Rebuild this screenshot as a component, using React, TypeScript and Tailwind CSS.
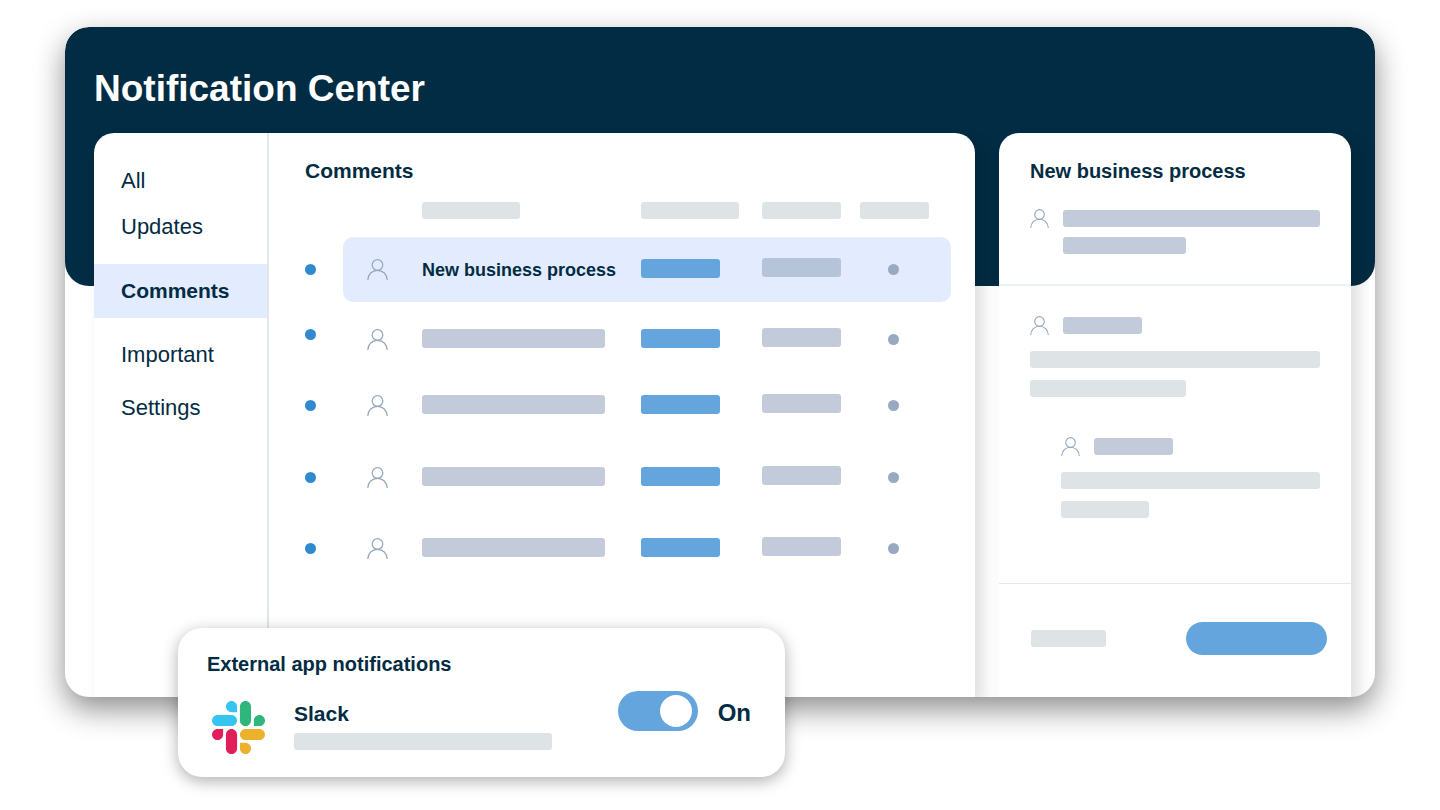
import { useState } from "react";
import clsx from "clsx";

type Row = { id: number; title?: string; height: string; unreadTop: string };

const rows: Row[] = [
  { id: 1, title: "New business process", height: "h-[70px]", unreadTop: "pt-[27px]" },
  { id: 2, height: "h-[66px]", unreadTop: "pt-[22px]" },
  { id: 3, height: "h-[72px]", unreadTop: "pt-[27px]" },
  { id: 4, height: "h-[71px]", unreadTop: "pt-[27px]" },
  { id: 5, height: "h-[65px]", unreadTop: "pt-[27px]" },
];

const navItems = [
  { label: "All", box: "h-[46px]" },
  { label: "Updates", box: "h-[46px]" },
  { label: "Comments", box: "mt-[15px] mb-2.5 h-[54px]", active: true },
  { label: "Important", box: "h-[53px]" },
  { label: "Settings", box: "h-[53px]" },
];

function PersonIcon({ className }: { className?: string }) {
  return (
    <svg viewBox="0 0 21 21" fill="none" stroke="#94a6be" strokeWidth="1.2" className={className} aria-hidden="true">
      <circle cx="10.5" cy="6" r="5.3" />
      <path d="M0.8 21C1 15.2 5 11.3 10.5 11.3S20 15.2 20.2 21" />
    </svg>
  );
}

function SlackLogo() {
  return (
    <svg viewBox="0 0 122.8 122.8" className="size-[53px] shrink-0" aria-hidden="true">
      <path fill="#e01e5a" d="M25.8 77.6c0 7.1-5.8 12.9-12.9 12.9S0 84.7 0 77.6s5.8-12.9 12.9-12.9h12.9v12.9zm6.5 0c0-7.1 5.8-12.9 12.9-12.9s12.9 5.8 12.9 12.9v32.3c0 7.1-5.8 12.9-12.9 12.9s-12.9-5.8-12.9-12.9V77.6z" />
      <path fill="#36c5f0" d="M45.2 25.8c-7.1 0-12.9-5.8-12.9-12.9S38.1 0 45.2 0s12.9 5.8 12.9 12.9v12.9H45.2zm0 6.5c7.1 0 12.9 5.8 12.9 12.9s-5.8 12.9-12.9 12.9H12.9C5.8 58.1 0 52.3 0 45.2s5.8-12.9 12.9-12.9h32.3z" />
      <path fill="#2eb67d" d="M97 45.2c0-7.1 5.8-12.9 12.9-12.9s12.9 5.8 12.9 12.9-5.8 12.9-12.9 12.9H97V45.2zm-6.5 0c0 7.1-5.8 12.9-12.9 12.9s-12.9-5.8-12.9-12.9V12.9C64.7 5.8 70.5 0 77.6 0s12.9 5.8 12.9 12.9v32.3z" />
      <path fill="#ecb22e" d="M77.6 97c7.1 0 12.9 5.8 12.9 12.9s-5.8 12.9-12.9 12.9-12.9-5.8-12.9-12.9V97h12.9zm0-6.5c-7.1 0-12.9-5.8-12.9-12.9s5.8-12.9 12.9-12.9h32.3c7.1 0 12.9 5.8 12.9 12.9s-5.8 12.9-12.9 12.9H77.6z" />
    </svg>
  );
}

function Bar({ className }: { className: string }) {
  return <div className={clsx("rounded-[3px]", className)} />;
}

function Sidebar() {
  return (
    <nav className="w-[175px] shrink-0 border-r-2 border-[#e0e6e9] pt-6">
      {navItems.map((item) => (
        <a
          key={item.label}
          href="#"
          aria-current={item.active ? "page" : undefined}
          className={clsx(
            "flex items-center pl-[27px]",
            item.box,
            item.active ? "bg-[#e3ecff] text-[21px] font-bold" : "text-[22px]",
          )}
        >
          {item.label}
        </a>
      ))}
    </nav>
  );
}

function CommentRow({ row }: { row: Row }) {
  const selected = Boolean(row.title);
  const cell = clsx("h-[65px]", selected && "bg-[#e3ecff]");
  return (
    <tr className={clsx("align-top", row.height)}>
      <td>
        <div className={row.unreadTop}>
          <div className="size-[11px] rounded-full bg-[#2f8ad0]" />
        </div>
      </td>
      <td>
        <div className={clsx(cell, "rounded-l-[10px] pt-[22px] pl-6")}>
          <PersonIcon className="size-[21px]" />
        </div>
      </td>
      <td>
        <div className={clsx(cell, "pt-[22px]")}>
          {row.title ? (
            <span className="block text-[18px] leading-[22px] font-bold whitespace-nowrap">{row.title}</span>
          ) : (
            <Bar className="h-[19px] w-[183px] bg-[#c3cbdb]" />
          )}
        </div>
      </td>
      <td>
        <div className={clsx(cell, "pt-[22px]")}>
          <Bar className="h-[19px] w-[79px] bg-[#63a5dc]" />
        </div>
      </td>
      <td>
        <div className={clsx(cell, "pt-[21px]")}>
          <Bar className={clsx("h-[19px] w-[79px]", selected ? "bg-[#b5c4d8]" : "bg-[#c3cbdb]")} />
        </div>
      </td>
      <td>
        <div className={clsx(cell, "rounded-r-[10px] pt-[27px] pl-7")}>
          <div className="size-[11px] rounded-full bg-[#98a9c1]" />
        </div>
      </td>
    </tr>
  );
}

function CommentsList() {
  return (
    <section className="min-w-0 flex-1 pt-6 pr-6 pl-9">
      <h2 className="text-[21px] leading-7 font-bold">Comments</h2>
      <table className="mt-[17px] w-full table-fixed border-collapse">
        <colgroup>
          <col className="w-[38px]" />
          <col className="w-[79px]" />
          <col />
          <col className="w-[121px]" />
          <col className="w-[98px]" />
          <col className="w-[91px]" />
        </colgroup>
        <thead>
          <tr className="h-[35px] align-top">
            <td />
            <td />
            <th><Bar className="h-[17px] w-[98px] bg-[#dee4e6]" /></th>
            <th><Bar className="h-[17px] w-[98px] bg-[#dee4e6]" /></th>
            <th><Bar className="h-[17px] w-[79px] bg-[#dee4e6]" /></th>
            <th><Bar className="h-[17px] w-[69px] bg-[#dee4e6]" /></th>
          </tr>
        </thead>
        <tbody>
          {rows.map((row) => (
            <CommentRow key={row.id} row={row} />
          ))}
        </tbody>
      </table>
    </section>
  );
}

function DetailPanel() {
  return (
    <aside className="flex w-[352px] shrink-0 flex-col rounded-t-[20px] bg-white shadow-[8px_8px_16px_rgba(0,0,0,0.13)]">
      <header className="h-[153px] border-b-2 border-[#eef1f2] px-[31px] pt-6">
        <h2 className="text-[20px] leading-7 font-bold">New business process</h2>
        <div className="mt-6 flex gap-[14px]">
          <PersonIcon className="size-[19px] shrink-0" />
          <div className="flex-1 pt-px">
            <Bar className="h-[17px] bg-[#c3cbdb]" />
            <Bar className="mt-2.5 h-[17px] w-[123px] bg-[#c3cbdb]" />
          </div>
        </div>
      </header>

      <div className="flex-1 px-[31px] pt-[30px]">
        <div className="flex items-center gap-[14px]">
          <PersonIcon className="size-[19px]" />
          <Bar className="h-[17px] w-[79px] bg-[#c3cbdb]" />
        </div>
        <Bar className="mt-4 h-[17px] bg-[#dee4e6]" />
        <Bar className="mt-3 h-[17px] w-[156px] bg-[#dee4e6]" />

        <div className="mt-10 pl-[31px]">
          <div className="flex items-center gap-[14px]">
            <PersonIcon className="size-[19px]" />
            <Bar className="h-[17px] w-[79px] bg-[#c3cbdb]" />
          </div>
          <Bar className="mt-4 h-[17px] bg-[#dee4e6]" />
          <Bar className="mt-3 h-[17px] w-[88px] bg-[#dee4e6]" />
        </div>
      </div>

      <footer className="flex h-[114px] items-center justify-between border-t border-[#e4e9eb] pr-6 pb-1 pl-8">
        <Bar className="h-[17px] w-[75px] bg-[#dee4e6]" />
        <button type="button" aria-label="Reply" className="h-[33px] w-[141px] rounded-full bg-[#63a5dc]" />
      </footer>
    </aside>
  );
}

function ExternalApps() {
  const [on, setOn] = useState(true);
  return (
    <section className="absolute -bottom-20 left-[113px] w-[607px] rounded-[24px] bg-white px-[29px] pt-[22px] pb-[23px] shadow-[0_4px_16px_rgba(0,0,0,0.32)]">
      <h2 className="text-[20px] leading-7 font-bold">External app notifications</h2>
      <div className="mt-3 flex items-start pl-[5px]">
        <div className="pt-[11px]">
          <SlackLogo />
        </div>
        <div className="pt-2.5 pl-[29px]">
          <h3 className="text-[21px] leading-7 font-bold">Slack</h3>
          <Bar className="mt-[5px] h-[17px] w-[258px] bg-[#dee4e6]" />
        </div>
        <label className="ml-auto flex items-center gap-5 pt-px pr-[5px]">
          <input
            type="checkbox"
            role="switch"
            checked={on}
            onChange={(e) => setOn(e.target.checked)}
            className="h-10 w-20 appearance-none rounded-full bg-[#c3cbdb] px-1.5 py-1 before:block before:size-8 before:rounded-full before:bg-white checked:bg-[#63a5dc] checked:before:ml-auto"
          />
          <span className="pt-1 text-[24px] leading-8 font-bold">{on ? "On" : "Off"}</span>
        </label>
      </div>
    </section>
  );
}

export default function App() {
  return (
    <div className="min-h-screen overflow-hidden bg-white px-[65px] pt-[27px] pb-[113px] font-['Liberation_Sans',Arial,sans-serif] text-[#022c43]">
      <div className="relative">
        <main className="grid min-h-[670px] overflow-hidden rounded-[24px] bg-white shadow-[0_12px_30px_rgba(0,0,0,0.45)]">
          <div className="col-start-1 row-start-1 h-[259px] self-start rounded-[24px] bg-[#022c43]" />
          <div className="col-start-1 row-start-1 flex flex-col pr-6 pl-[29px]">
            <h1 className="pt-[38px] pb-5 text-[37px] leading-[48px] font-bold text-white">Notification Center</h1>
            <div className="flex flex-1 gap-6">
              <div className="flex min-w-0 flex-1 overflow-hidden rounded-t-[20px] bg-white shadow-[8px_8px_16px_rgba(0,0,0,0.13)]">
                <Sidebar />
                <CommentsList />
              </div>
              <DetailPanel />
            </div>
          </div>
        </main>
        <ExternalApps />
      </div>
    </div>
  );
}
